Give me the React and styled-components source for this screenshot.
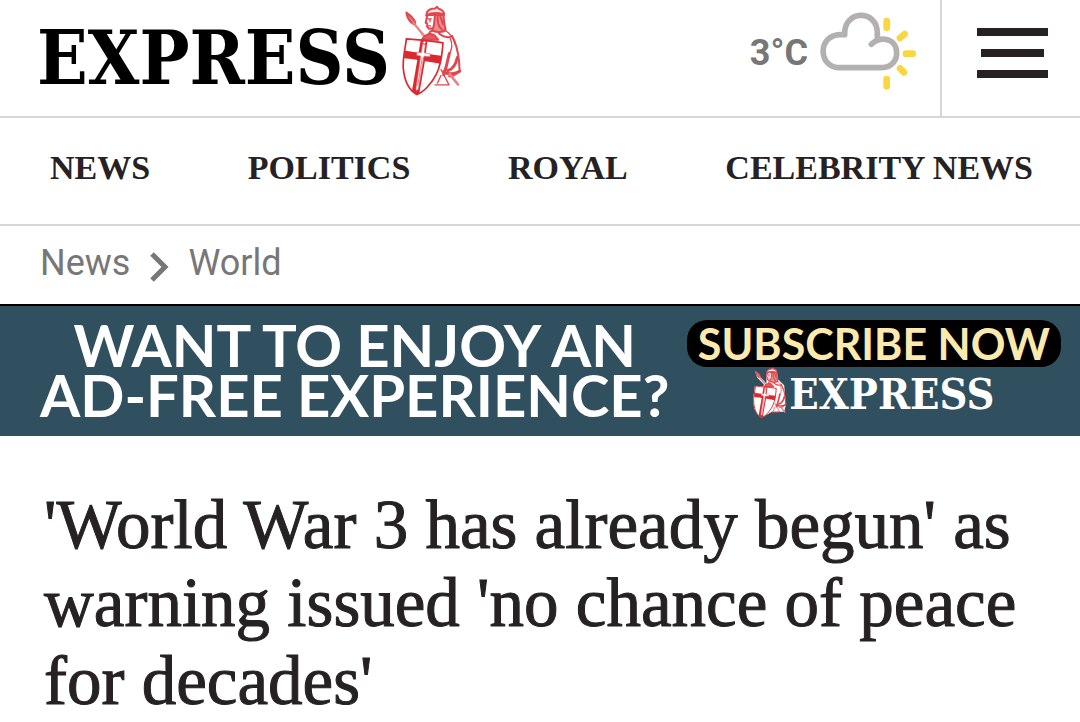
import React from "react";
import styled, { createGlobalStyle } from "styled-components";

const navLinks = ["NEWS", "POLITICS", "ROYAL", "CELEBRITY NEWS"];

function Crusader() {
  return (
    <svg viewBox="40 15 180 275" aria-hidden="true">
      {/* white backing, only seen on dark backgrounds */}
      <path
        d="M110 60 118 32 145 20 166 34 172 80 205 112 214 215 205 252H140L84 284 46 236 40 185 50 115H92L100 110 62 70 50 38 78 66 112 104Z"
        fill="#fff"
      />
      <g fill="none" stroke="#e0484e" strokeWidth="6" strokeLinejoin="round" strokeLinecap="round">
        {/* spear */}
        <path d="M53 37C63 44 76 53 80 68L75 72C63 66 56 54 53 37Z" fill="#e77b7d" />
        <path d="M74 68 106 107" strokeWidth="7" stroke="#e88385" />
        {/* helmet and face */}
        <path d="M114 45C112 29 128 25 139 25L145 20 150 26C161 28 167 36 166 43Z" fill="#fbe3e3" />
        <path d="M113 46C126 39 148 38 166 43" strokeWidth="7" />
        <path d="M115 50 111 68 116 70 115 78 121 86 133 84" />
        <path d="M117 56H128M124 59V65M119 77H126" strokeWidth="4" />
        <path d="M139 46C136 65 138 78 130 91C146 98 163 96 171 90C168 75 164 58 165 44Z" fill="#ec8e90" />
        <path d="M147 51C146 66 149 80 160 88M155 49 163 72M131 91C125 93 122 97 121 101" />
        {/* shoulder, cloak and arm */}
        <path d="M100 119C107 103 123 98 137 105L149 119Z" fill="#df5d60" />
        <path d="M151 100C165 112 183 114 190 107C201 127 208 154 211 182L213 214 190 229 181 228" />
        <path d="M169 91C185 98 193 112 199 132M184 113C194 135 189 148 181 164" strokeWidth="4" />
        <path d="M182 160 172 202 165 224M206 172C201 195 192 207 178 211M164 215C179 225 201 221 213 213" strokeWidth="9" />
        <path d="M157 208 181 254H139M157 226 146 249" strokeWidth="4" />
        <path d="M183 222 208 253" strokeWidth="8" stroke="#e88385" />
      </g>
      {/* shield */}
      <path
        d="M53 116C88 119 124 121 163 128C160 159 160 189 143 222C130 249 104 277 84 283C61 270 48 245 44 207C41 173 50 148 53 116Z"
        fill="#fff"
        stroke="#dc2830"
        strokeWidth="5"
        strokeLinejoin="round"
      />
      <path d="M48 151C84 157 119 162 158 167L156 191C120 184 84 178 46 174Z" fill="#dc2830" />
      <path d="M96 121 116 123 109 182 92 280 84 283 70 272Z" fill="#dc2830" />
      {/* sword */}
      <path
        d="M102 130 110 131 107 158 124 161 124 170 106 168 89 267 82 272 82 263 96 168 84 165 85 156 98 157Z"
        fill="#fff"
        stroke="#dc6064"
        strokeWidth="2"
      />
      <path d="M101 172 87 257" stroke="#dc4048" strokeWidth="2" />
      <circle cx="107" cy="127" r="5" fill="#fff" stroke="#dc2830" strokeWidth="3" />
    </svg>
  );
}

function WeatherIcon() {
  return (
    <svg viewBox="240 35 291 240" width="97" height="80" aria-hidden="true">
      <path
        d="M394 132C414 107 470 110 470 158C470 184 451 202 426 202H300C232 202 233 104 300 103H314C311 27 412 26 412 98V116"
        fill="none"
        stroke="#b4b0b0"
        strokeWidth="17"
        strokeLinecap="round"
        strokeLinejoin="round"
      />
      <path
        d="M440 62V82M480 113 494 101M498 160H518M480 204 492 216M440 236V258"
        fill="none"
        stroke="#fbd63e"
        strokeWidth="20"
        strokeLinecap="round"
      />
    </svg>
  );
}

export default function App() {
  return (
    <>
      <GlobalStyle />
      <Header>
        <Brand href="#home" aria-label="Express">
          <Wordmark>EXPRESS</Wordmark>
          <Crusader />
        </Brand>
        <Weather>
          <span>3°C</span>
          <WeatherIcon />
        </Weather>
        <MenuButton type="button" aria-label="Open menu">
          <MenuBar />
          <MenuBar $short />
          <MenuBar />
        </MenuButton>
      </Header>

      <Nav aria-label="Sections">
        {navLinks.map((name) => (
          <a key={name} href={"#" + name.toLowerCase().replace(" ", "-")}>
            {name}
          </a>
        ))}
      </Nav>

      <Breadcrumb aria-label="Breadcrumb">
        <a href="#news">News</a>
        <svg width="20" height="32" viewBox="0 0 20 32" aria-hidden="true">
          <path d="M3 3 16 16 3 29" fill="none" stroke="#777" strokeWidth="5" />
        </svg>
        <a href="#world">World</a>
      </Breadcrumb>

      <Banner>
        <Pitch>
          WANT TO ENJOY AN
          <br />
          AD-FREE EXPERIENCE?
        </Pitch>
        <Offer>
          <Subscribe type="button">SUBSCRIBE NOW</Subscribe>
          <BannerBrand>
            <Crusader />
            <Wordmark $small>EXPRESS</Wordmark>
          </BannerBrand>
        </Offer>
      </Banner>

      <main>
        <Headline>
          'World War 3 has already begun' as warning issued 'no chance of peace for decades'
        </Headline>
      </main>
    </>
  );
}

const GlobalStyle = createGlobalStyle`
  * {
    box-sizing: border-box;
  }

  body {
    margin: 0;
    background: #fff;
    color: #262223;
    font-family: Roboto, sans-serif;
    overflow-x: hidden;
  }

  a {
    color: inherit;
    text-decoration: none;
  }

  svg {
    display: block;
    flex-shrink: 0;
  }
`;

const Header = styled.header`
  display: flex;
  align-items: stretch;
  height: 118px;
  border-bottom: 2px solid #d6d6d6;
`;

const Brand = styled.a`
  display: flex;
  align-items: flex-start;
  gap: 12px;
  padding: 5px 0 0 37px;
  color: #000;

  svg {
    width: 60px;
    height: 92px;
  }
`;

const Wordmark = styled.span`
  font-family: "DejaVu Serif Condensed", "DejaVu Serif", serif;
  font-stretch: condensed;
  font-weight: bold;
  font-size: ${(props) => (props.$small ? "43px" : "74px")};
  line-height: ${(props) => (props.$small ? "54px" : "106px")};
`;

const Weather = styled.div`
  display: flex;
  align-items: flex-start;
  gap: 12px;
  margin-left: auto;
  padding: 12px 23px 0 0;
  color: #777;
  font-size: 36px;
  font-weight: bold;
  line-height: 82px;
`;

const MenuButton = styled.button`
  display: flex;
  flex-direction: column;
  align-items: center;
  gap: 13px;
  width: 140px;
  padding: 28px 0 0 2px;
  border: 0;
  border-left: 2px solid #d6d6d6;
  background: none;
  cursor: pointer;
`;

const MenuBar = styled.span`
  width: ${(props) => (props.$short ? "63px" : "71px")};
  height: 8px;
  background: #262223;
`;

const Nav = styled.nav`
  display: flex;
  justify-content: space-between;
  padding: 0 47px 6px 50px;
  border-bottom: 2px solid #d6d6d6;
  font-family: "Liberation Serif", serif;
  font-size: 34px;
  font-weight: bold;
  line-height: 100px;
`;

const Breadcrumb = styled.nav`
  display: flex;
  align-items: center;
  gap: 19px;
  padding: 0 40px 4px;
  color: #777;
  font-size: 36px;
  line-height: 74px;

  svg {
    margin-top: 8px;
  }
`;

const Banner = styled.section`
  display: flex;
  justify-content: space-between;
  padding: 14px 19px 15px 40px;
  border-top: 2px solid #000;
  background: #31505f;
  color: #fff;
  font-family: Lato, sans-serif;
`;

const Pitch = styled.p`
  margin: 0;
  font-size: 58px;
  font-weight: bold;
  line-height: 50px;
  text-align: center;
  white-space: nowrap;
`;

const Offer = styled.div`
  display: flex;
  flex-direction: column;
  align-items: center;
`;

const Subscribe = styled.button`
  padding: 0 11px;
  border: 0;
  border-radius: 20px;
  background: #000;
  color: #fce9ae;
  font-family: inherit;
  font-size: 43px;
  font-weight: bold;
  line-height: 47px;
  white-space: nowrap;
  cursor: pointer;
`;

const BannerBrand = styled.div`
  display: flex;
  align-items: flex-start;
  gap: 2px;

  svg {
    width: 34px;
    height: 52px;
  }
`;

const Headline = styled.h1`
  margin: 0;
  padding: 50px 44px 0;
  font-family: "Liberation Serif", serif;
  font-size: 69px;
  font-weight: normal;
  line-height: 78px;
  -webkit-text-stroke: 1px currentColor;
`;
